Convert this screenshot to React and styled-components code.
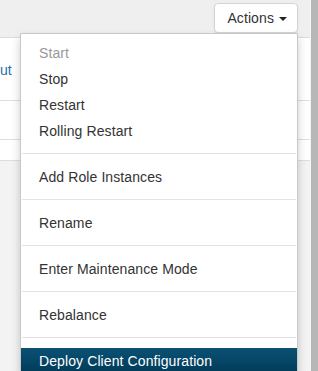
import React from "react";
import styled, { createGlobalStyle } from "styled-components";

const GlobalStyle = createGlobalStyle`
  html, body {
    margin: 0;
    padding: 0;
    background: #f3f3f3;
  }
  body {
    font-family: "Liberation Sans", Arial, sans-serif;
    font-size: 14px;
    color: #333;
  }
`;

const Page = styled.div`
  display: flex;
  width: 318px;
  height: 371px;
  overflow: hidden;
`;

const Main = styled.div`
  flex: 1;
  display: flex;
  flex-direction: column;
  background: #f3f3f3;
`;

const Track = styled.div`
  width: 7px;
  background: #b7b7b7;
  border-left: 1px solid #f4f4f4;
`;

const Header = styled.div`
  height: 37px;
  flex-shrink: 0;
  background: #efefef;
  display: flex;
  justify-content: flex-end;
  align-items: flex-start;
  padding: 3px 12px 0 0;
  box-sizing: border-box;
`;

const ButtonWrap = styled.div`
  position: relative;
`;

const ActionsButton = styled.button`
  display: flex;
  align-items: center;
  gap: 5px;
  height: 30px;
  padding: 0 10px 0 12px;
  background: #fff;
  border: 1px solid #d4d4d4;
  border-radius: 4px;
  box-shadow: 0 1px 2px rgba(0, 0, 0, 0.08);
  font-family: inherit;
  font-size: 14px;
  letter-spacing: 0.1px;
  color: #333;
  cursor: pointer;
`;

const Caret = styled.span`
  width: 0;
  height: 0;
  border-top: 4px solid #222;
  border-left: 4px solid transparent;
  border-right: 4px solid transparent;
  margin-top: 1px;
`;

const Panel = styled.div`
  background: #fff;
  border-top: 1px solid #dcdcdc;
  display: flex;
  flex-direction: column;
`;

const Row = styled.div`
  height: ${({ $h }) => $h}px;
  box-sizing: border-box;
  border-bottom: 1px solid #dedede;
  display: flex;
  align-items: center;
`;

const Link = styled.a`
  color: #1f6fa8;
  text-decoration: none;
  font-size: 14px;
  margin-top: 2px;
`;

const Menu = styled.ul`
  position: absolute;
  top: 30px;
  right: 0;
  width: 278px;
  box-sizing: border-box;
  margin: 0;
  padding: 6px 0 0;
  list-style: none;
  background: #fff;
  border: 1px solid #c8c8c8;
  border-radius: 0 0 4px 4px;
  box-shadow: 0 5px 10px rgba(0, 0, 0, 0.2);
  z-index: 10;
`;

const Item = styled.li`
  height: 26px;
  line-height: 20px;
  padding: 3px 18px;
  white-space: nowrap;
  letter-spacing: 0.1px;
  color: ${({ $disabled, $active }) =>
    $disabled ? "#999" : $active ? "#fff" : "#333"};
  background: ${({ $active }) =>
    $active ? "linear-gradient(to bottom, #0a5174, #003a58)" : "transparent"};
  box-sizing: border-box;
`;

const Divider = styled.li`
  height: 1px;
  margin: 9px 1px 10px;
  background: #e3e3e3;
`;

const menu = [
  { label: "Start", disabled: true },
  { label: "Stop" },
  { label: "Restart" },
  { label: "Rolling Restart" },
  "divider",
  { label: "Add Role Instances" },
  "divider",
  { label: "Rename" },
  "divider",
  { label: "Enter Maintenance Mode" },
  "divider",
  { label: "Rebalance" },
  "divider",
  { label: "Deploy Client Configuration", active: true },
];

export default function App() {
  return (
    <>
      <GlobalStyle />
      <Page>
        <Main>
          <Header>
            <ButtonWrap>
              <ActionsButton>
                Actions <Caret />
              </ActionsButton>
              <Menu>
                {menu.map((m, i) =>
                  m === "divider" ? (
                    <Divider key={i} />
                  ) : (
                    <Item key={i} $disabled={m.disabled} $active={m.active}>
                      {m.label}
                    </Item>
                  )
                )}
              </Menu>
            </ButtonWrap>
          </Header>
          <Panel>
            <Row $h={63}>
              <Link href="#">ut</Link>
            </Row>
            <Row $h={39} />
            <Row $h={21} />
          </Panel>
        </Main>
        <Track />
      </Page>
    </>
  );
}
